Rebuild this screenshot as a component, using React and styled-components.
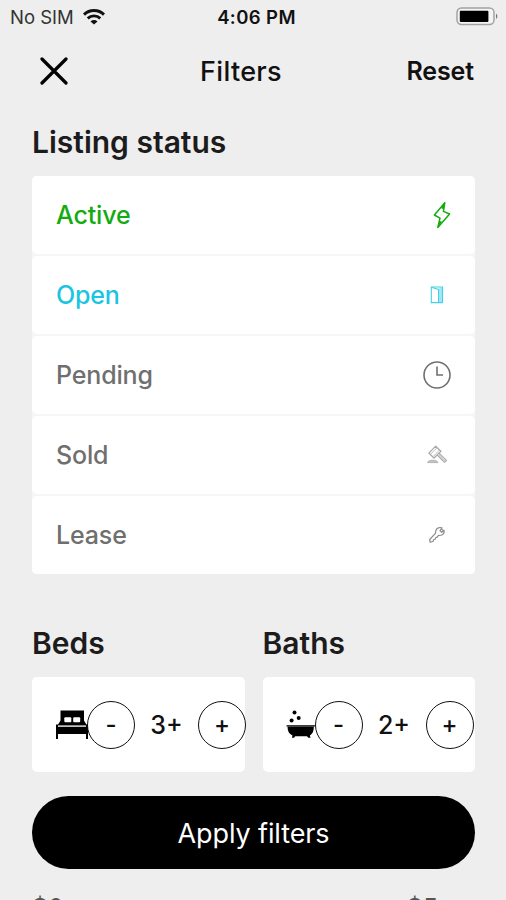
import React from 'react';
import styled, { createGlobalStyle } from 'styled-components';

const STATUSES = [
  { label: 'Active', color: '#14ab10', align: 'flex-end', Icon: BoltIcon },
  { label: 'Open', color: '#19c5e0', align: 'center', Icon: DoorIcon },
  { label: 'Pending', color: '#6f6f6f', align: 'center', Icon: ClockIcon },
  { label: 'Sold', color: '#6f6f6f', align: 'center', Icon: GavelIcon },
  { label: 'Lease', color: '#6f6f6f', align: 'center', Icon: KeyIcon },
];

function App() {
  return (
    <>
      <GlobalStyle />
      <Screen>
        <StatusBar>
          <Carrier>
            <span>No SIM</span>
            <WifiIcon />
          </Carrier>
          <Time>4:06 PM</Time>
          <BatteryIcon />
        </StatusBar>
        <Header>
          <CloseButton aria-label="Close">
            <CloseIcon />
          </CloseButton>
          <Title>Filters</Title>
          <ResetButton>Reset</ResetButton>
        </Header>
        <Content>
          <SectionTitle>Listing status</SectionTitle>
          <StatusList>
            {STATUSES.map(({ label, color, align, Icon }) => (
              <StatusRow key={label} $color={color}>
                <StatusLabel>{label}</StatusLabel>
                <IconSlot $align={align}>
                  <Icon />
                </IconSlot>
              </StatusRow>
            ))}
          </StatusList>
          <Counters>
            <Counter title="Beds" value="3+" icon={<BedIcon />} />
            <Counter title="Baths" value="2+" icon={<BathIcon />} />
          </Counters>
          <ApplyButton>Apply filters</ApplyButton>
          <PriceRange>
            <span>$0</span>
            <span>$5</span>
          </PriceRange>
        </Content>
      </Screen>
    </>
  );
}

function Counter({ title, value, icon }) {
  return (
    <div>
      <SectionTitle>{title}</SectionTitle>
      <CounterCard>
        {icon}
        <RoundButton>-</RoundButton>
        <CounterValue>{value}</CounterValue>
        <RoundButton>+</RoundButton>
      </CounterCard>
    </div>
  );
}

function WifiIcon() {
  return (
    <svg width="22" height="16" viewBox="0 0 22 16" fill="none" stroke="#111">
      <path d="M1 5.6C6.6.2 15.4.2 21 5.6" strokeWidth="2.9" />
      <path d="M4.7 9.4c3.6-3.3 9-3.3 12.6 0" strokeWidth="2.8" />
      <path d="M11 15.6 7.5 12.4c2-1.800 5-1.800 7 0z" fill="#111" stroke="none" />
    </svg>
  );
}

function BatteryIcon() {
  return (
    <svg width="43" height="19" viewBox="0 0 43 19">
      <rect x="1" y="1" width="37" height="16.6" rx="4.5" fill="#f4f4f4" stroke="#a2a2a2" strokeWidth="1.5" />
      <rect x="3.8" y="3.8" width="28.6" height="11.2" rx="1" fill="#000" />
      <path d="M40 6.8c1.8.5 1.8 4.5 0 5z" fill="#777" />
    </svg>
  );
}

function CloseIcon() {
  return (
    <svg width="28" height="28" viewBox="0 0 28 28" stroke="#000" strokeWidth="3.2" strokeLinecap="round">
      <path d="M2 2l24 24M26 2L2 26" />
    </svg>
  );
}

function BoltIcon() {
  return (
    <svg width="20" height="28" viewBox="0 0 18 28" fill="none" stroke="currentColor" strokeWidth="1.5" strokeLinejoin="round">
      <path d="M11.8 1.8 1.4 14l5.6 3.2-2.2 9.2L16.600 13l-6.200-2.600z" />
      <path d="M11.800 1.800 8 7l2.700 1.500zM4.800 26.400l4.200-5.600-2.700-1z" fill="currentColor" stroke="none" />
    </svg>
  );
}

function DoorIcon() {
  return (
    <svg width="14" height="18" viewBox="0 0 14 18" fill="none" stroke="currentColor" opacity="0.8">
      <path d="M1.3 1h11.2v15.6H1.3z" strokeWidth="1.1" />
      <path d="M1.3 1.2 8.6 3.4v13.4" strokeWidth="1.2" />
      <path d="M9.2 1.5h3v15h-3z" fill="currentColor" stroke="none" opacity="0.5" />
    </svg>
  );
}

function ClockIcon() {
  return (
    <svg width="30" height="30" viewBox="0 0 30 30" fill="none" stroke="#707070" strokeWidth="1.6">
      <circle cx="15" cy="15" r="13" />
      <path d="M15 6.5V15h6" />
    </svg>
  );
}

function GavelIcon() {
  return (
    <svg width="22" height="20" viewBox="0 0 22 20" fill="none" stroke="#a8a8a8" strokeWidth="1.2" strokeLinejoin="round">
      <path d="M9.600 1.200 15 6.200l-7 6.800L2.900 8.200z" />
      <path d="m11 2.800-6.600 6.600M13.600 5 7 11.600" strokeWidth="0.8" />
      <path d="m11 9.800 7.600 7.400 1.900-1.800-7.600-7.200" />
      <path d="m12 9.200 7.400 7" stroke="#d0d0d0" />
      <path d="M1.500 17.600c.8-3.200 9.700-3.200 10.500 0z" fill="#c4c4c4" strokeWidth="0.800" />
    </svg>
  );
}

function KeyIcon() {
  return (
    <svg width="18" height="18" viewBox="0 0 18 18" fill="none" stroke="#8c8c8c" strokeWidth="1.2" strokeLinejoin="round">
      <path d="M7.8 4.600c.8-2.600 3.800-3.700 6.200-2.700l-2 2.700 1.700 1.700 2.400-2c.5 2.900-1.400 5.200-4.200 5.200l-1.400-.1-1.300 1.800-1.500.4-.6 1.700-1.500.5-.6 1.700-3 .6-.3-2.600 5.700-6.100z" />
      <path d="M13.200 2.700l2.200 2.200" />
    </svg>
  );
}

function BedIcon() {
  return (
    <svg width="31" height="30" viewBox="0 0 31 30" overflow="visible">
      <path d="M4.5.6H28v9.900L31 15.500H1.500L4.500 10.500z" fill="#000" />
      <rect x="8.300" y="7.200" width="7" height="5" rx="1" fill="#fff" />
      <rect x="17.200" y="7.200" width="7" height="5" rx="1" fill="#fff" />
      <path d="M0 14.500h2v2.500h28v-2.500h2v14.400h-2V24H2v4.900H0z" fill="#000" />
      <path d="M2 16h28" stroke="#999" strokeWidth="1.200" />
    </svg>
  );
}

function BathIcon() {
  return (
    <svg width="28" height="30" viewBox="0 0 28 30" overflow="visible">
      <circle cx="7.500" cy="2.500" r="2" />
      <circle cx="11.700" cy="8" r="2" />
      <circle cx="4.600" cy="10.600" r="2" />
      <path d="M-.5 15.800h29" stroke="#333" strokeWidth="1.500" />
      <path d="M.5 16.500h26.400c0 4.500-1.500 7.500-4 9l.6 2.300h-2.200l-1.300-1.500H8.100l-1 1.500H4.900l.6-2.300c-3.500-1.500-5-4.500-5-9z" />
    </svg>
  );
}

const GlobalStyle = createGlobalStyle`
  * {
    box-sizing: border-box;
  }
  body {
    margin: 0;
    background: #eee;
    overflow: hidden;
  }
  button {
    padding: 0;
    border: 0;
    background: none;
    font: inherit;
    color: inherit;
  }
  svg {
    display: block;
    flex-shrink: 0;
  }
`;

const Screen = styled.div`
  width: 506px;
  height: 900px;
  overflow: hidden;
  background: #eee;
  color: #111;
  font-family: Inter, 'Liberation Sans', sans-serif;
`;

const StatusBar = styled.div`
  display: grid;
  grid-template-columns: 1fr auto 1fr;
  align-items: center;
  height: 33px;
  padding: 0 7px 0 10px;

  > svg {
    justify-self: end;
  }
`;

const Carrier = styled.div`
  display: flex;
  align-items: center;
  gap: 9px;
  font-size: 18.5px;
  color: #333;
`;

const Time = styled.div`
  padding-left: 4px;
  font-size: 18.5px;
  font-weight: 600;
  letter-spacing: 0.4px;
`;

const Header = styled.header`
  display: grid;
  grid-template-columns: 68px 1fr 100px;
  align-items: center;
  height: 76px;
  padding: 0 32px 0 40px;
`;

const CloseButton = styled.button`
  justify-self: start;
`;

const Title = styled.h1`
  margin: 0;
  font-size: 27px;
  font-weight: 500;
  letter-spacing: 0.3px;
  text-align: center;
`;

const ResetButton = styled.button`
  justify-self: end;
  font-size: 25px;
  font-weight: 600;
  letter-spacing: -0.1px;
`;

const Content = styled.main`
  padding: 12px 31px 0 32px;
`;

const SectionTitle = styled.h2`
  margin: 0;
  height: 55px;
  font-size: 30px;
  font-weight: 600;
  line-height: 42px;
  color: #1c1c1c;
`;

const StatusList = styled.div`
  display: grid;
  gap: 2px;
  background: #f6f6f6;
  border-radius: 4px;
`;

const StatusRow = styled.div`
  display: flex;
  align-items: center;
  justify-content: space-between;
  height: 78px;
  padding: 0 23px 0 24px;
  border-radius: 5px;
  background: #fff;
  color: ${({ $color }) => $color};
`;

const StatusLabel = styled.span`
  font-size: 25px;
  font-weight: 500;
  letter-spacing: -0.15px;
`;

const IconSlot = styled.span`
  display: flex;
  justify-content: ${({ $align }) => $align};
  width: 30px;
`;

const Counters = styled.div`
  display: grid;
  grid-template-columns: repeat(2, minmax(0, 1fr));
  gap: 18px;
  margin-top: 48px;
`;

const CounterCard = styled.div`
  display: flex;
  align-items: center;
  height: 95px;
  padding-left: 24px;
  border-radius: 5px;
  background: #fff;
`;

const RoundButton = styled.button`
  flex: none;
  width: 48px;
  height: 48px;
  border: 1.5px solid #111;
  border-radius: 50%;
  font-size: 24px;
  font-weight: 500;
`;

const CounterValue = styled.span`
  flex: none;
  width: 63px;
  font-size: 25px;
  font-weight: 500;
  text-align: center;
`;

const ApplyButton = styled.button`
  display: block;
  width: 100%;
  height: 73px;
  margin-top: 24px;
  padding-top: 2px;
  border-radius: 37px;
  background: #000;
  color: #fff;
  font-size: 27px;
  letter-spacing: -0.1px;
`;

const PriceRange = styled.div`
  display: flex;
  justify-content: space-between;
  margin-top: 22px;
  padding-right: 37px;
  font-size: 25px;
  line-height: 34px;
  color: #555;
`;

export default App;
